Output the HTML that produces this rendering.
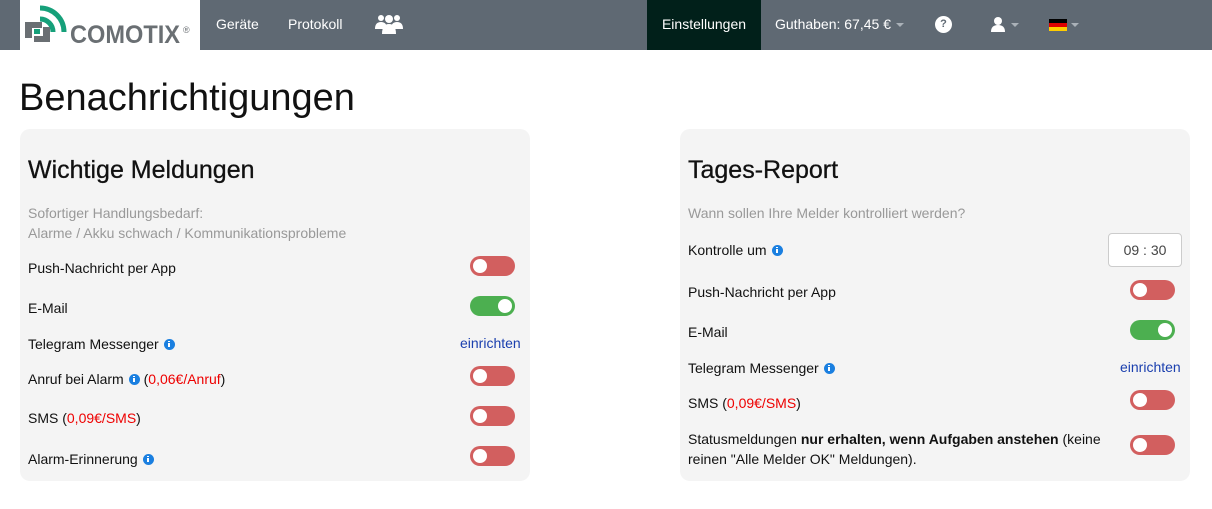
<!DOCTYPE html><html><head><meta charset="utf-8"><style>
*{margin:0;padding:0;box-sizing:border-box}
body{width:1212px;height:509px;background:#fff;font-family:"Liberation Sans",sans-serif;position:relative;overflow:hidden;color:#111}
.nav{position:absolute;left:0;top:0;width:1212px;height:50px;background:#5f6973}
.logo{position:absolute;left:20px;top:0;width:180px;height:50px;background:#fff}
.n{position:absolute;top:0;height:50px;line-height:48px;color:#fff;font-size:14px}
.caret{display:inline-block;width:0;height:0;border-left:4px solid transparent;border-right:4px solid transparent;border-top:4px solid #aab1b8;vertical-align:middle;margin-left:5px}
.a{position:absolute;font-size:14px;white-space:nowrap}
.g{color:#999}
.panel{position:absolute;top:129px;width:510px;height:352px;background:#f4f4f4;border-radius:10px}
.tg{position:absolute;width:45px;height:20px;border-radius:10px;background:#d25f5f}
.tg::after{content:"";position:absolute;left:3px;top:3px;width:14px;height:14px;border-radius:50%;background:#fff}
.tg.on{background:#4caf50}.tg.on::after{left:28px}
.i{display:inline-block;width:11px;height:11px;background:#1a7fe0;border-radius:50%;vertical-align:middle;margin-left:5px;position:relative;top:-1px}
.i::after{content:"";position:absolute;left:4.5px;top:4px;width:2px;height:4px;background:#fff}
.i::before{content:"";position:absolute;left:4.5px;top:2px;width:2px;height:1.5px;background:#fff}
.r{color:#e00}
.lk{color:#1a3fae}
h2{position:absolute;font-weight:normal;font-size:25px;-webkit-text-stroke:0.3px #111}
</style></head><body>
<div class="nav">
<div class="logo">
<svg width="180" height="50" viewBox="0 0 180 50">
<g fill="none" stroke="#16a07a" stroke-width="5"><path d="M20 19a13 13 0 0 1 13 13"/><path d="M20 8a24 24 0 0 1 24 24"/></g>
<path d="M5 22h17v6h-10v10h-7z" fill="#6a6f73"/><path d="M14 36h9v-9h7v15h-16z" fill="#6a6f73"/><rect x="14" y="29" width="6" height="5" fill="#16a07a"/>
<text x="50" y="43" font-family="Liberation Sans" font-weight="bold" font-size="25" fill="#6a6f73" textLength="110" lengthAdjust="spacingAndGlyphs">COMOTIX</text>
<text x="163" y="33" font-size="9" fill="#6a6f73">®</text>
</svg></div>
<div class="n" style="left:216px">Geräte</div>
<div class="n" style="left:288px">Protokoll</div>
<svg class="n" style="left:374px;top:13px;height:22px" width="30" height="22" viewBox="0 0 30 22" fill="#fff"><circle cx="7" cy="5" r="3"/><circle cx="23" cy="5" r="3"/><circle cx="15" cy="6" r="4"/><path d="M1 16q0-7 6-7t6 7zM17 16q0-7 6-7t6 7z"/><path d="M8 21q0-10 7-10t7 10z"/></svg>
<div class="n" style="left:647px;width:114px;background:#01201a;text-align:center">Einstellungen</div>
<div class="n" style="left:775px">Guthaben: 67,45 €<span class="caret"></span></div>
<div class="n" style="left:935px;top:16px;width:17px;height:17px;border-radius:50%;background:#fff;color:#5f6973;font-size:11px;font-weight:bold;line-height:17px;text-align:center">?</div>
<svg class="n" style="left:991px;top:16px;height:16px" width="14" height="16" viewBox="0 0 14 16" fill="#fff"><circle cx="7" cy="5" r="4"/><path d="M0 16q0-7 7-7t7 7z"/></svg>
<span class="caret" style="position:absolute;left:1011px;top:23px;margin:0"></span>
<div style="position:absolute;left:1049px;top:19px;width:18px;height:12px"><div style="height:4px;background:#000"></div><div style="height:4px;background:#d00"></div><div style="height:4px;background:#fc0"></div></div>
<span class="caret" style="position:absolute;left:1071px;top:23px;margin:0"></span>
</div>
<div class="a" style="left:19px;top:77px;font-size:38px">Benachrichtigungen</div>
<div class="panel" style="left:20px"></div>
<div class="panel" style="left:680px"></div>
<h2 style="left:28px;top:156px">Wichtige Meldungen</h2>
<div class="a g" style="left:28px;top:205px">Sofortiger Handlungsbedarf:</div>
<div class="a g" style="left:28px;top:225px">Alarme / Akku schwach / Kommunikationsprobleme</div>
<div class="a" style="left:28px;top:260px">Push-Nachricht per App</div><div class="tg" style="left:470px;top:256px"></div>
<div class="a" style="left:28px;top:300px">E-Mail</div><div class="tg on" style="left:470px;top:296px"></div>
<div class="a" style="left:28px;top:336px">Telegram Messenger<span class="i"></span></div><div class="a lk" style="left:460px;top:335px">einrichten</div>
<div class="a" style="left:28px;top:371px">Anruf bei Alarm<span class="i"></span> (<span class="r">0,06€/Anruf</span>)</div><div class="tg" style="left:470px;top:366px"></div>
<div class="a" style="left:28px;top:410px">SMS (<span class="r">0,09€/SMS</span>)</div><div class="tg" style="left:470px;top:406px"></div>
<div class="a" style="left:28px;top:451px">Alarm-Erinnerung<span class="i"></span></div><div class="tg" style="left:470px;top:446px"></div>
<h2 style="left:688px;top:156px">Tages-Report</h2>
<div class="a g" style="left:688px;top:205px">Wann sollen Ihre Melder kontrolliert werden?</div>
<div class="a" style="left:688px;top:242px">Kontrolle um<span class="i"></span></div>
<div class="a" style="left:1108px;top:233px;width:74px;height:34px;background:#fff;border:1px solid #ccc;border-radius:4px;line-height:32px;text-align:center;color:#444">09 : 30</div>
<div class="a" style="left:688px;top:284px">Push-Nachricht per App</div><div class="tg" style="left:1130px;top:280px"></div>
<div class="a" style="left:688px;top:324px">E-Mail</div><div class="tg on" style="left:1130px;top:320px"></div>
<div class="a" style="left:688px;top:360px">Telegram Messenger<span class="i"></span></div><div class="a lk" style="left:1120px;top:359px">einrichten</div>
<div class="a" style="left:688px;top:395px">SMS (<span class="r">0,09€/SMS</span>)</div><div class="tg" style="left:1130px;top:390px"></div>
<div class="a" style="left:688px;top:431px">Statusmeldungen <b>nur erhalten, wenn Aufgaben anstehen</b> (keine</div>
<div class="a" style="left:688px;top:451px">reinen "Alle Melder OK" Meldungen).</div><div class="tg" style="left:1130px;top:435px"></div>
</body></html>
